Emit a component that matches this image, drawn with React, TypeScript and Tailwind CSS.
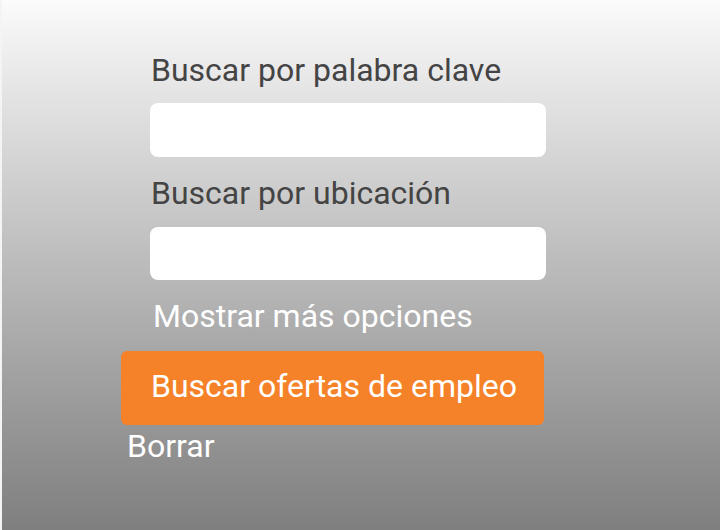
export default function App() {
    return (
        <div
            className="w-[720px] h-[530px] border-l-2 border-[#f4f4f4] bg-gradient-to-b from-[#fbfbfb] to-[#7f7f7f] text-[32px]"
            style={{ fontFamily: "Roboto, 'Liberation Sans', sans-serif" }}
        >
            <form className="flex flex-col pt-[50px] pl-[118px] w-[544px]">
                <label className="ml-[31px] text-[#444] leading-[40px] whitespace-nowrap">
                    Buscar por palabra clave
                </label>
                <input className="ml-[30px] mt-[13px] h-[54px] w-[396px] rounded-lg bg-white outline-none" type="text" />
                <label className="ml-[31px] mt-[16px] text-[#444] leading-[40px] whitespace-nowrap">
                    Buscar por ubicación
                </label>
                <input className="ml-[30px] mt-[14px] h-[53px] w-[396px] rounded-lg bg-white outline-none" type="text" />
                <a className="ml-[33px] mt-[16px] text-white leading-[40px] whitespace-nowrap">Mostrar más opciones</a>
                <button
                    type="button"
                    className="mt-[15px] ml-px h-[74px] w-[423px] rounded-md bg-[#f58228] text-white text-left pl-[30px] pb-[4px] whitespace-nowrap"
                >
                    Buscar ofertas de empleo
                </button>
                <a className="ml-[7px] mt-px text-white leading-[40px] whitespace-nowrap">Borrar</a>
            </form>
        </div>
    );
}
